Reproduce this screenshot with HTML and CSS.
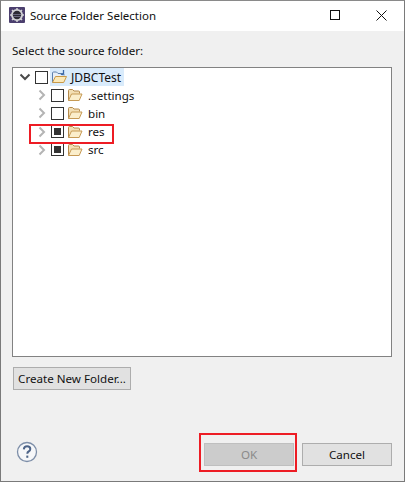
FILE: index.html
```html
<!DOCTYPE html>
<html lang="en">
<head>
<meta charset="utf-8">
<title>Source Folder Selection</title>
<link rel="stylesheet" href="styles.css">
</head>
<body>
<svg class="defs" width="0" height="0" aria-hidden="true">
  <defs>
    <symbol id="chev-right" viewBox="0 0 10 12"><path d="M2.5 1.5 7 6l-4.500 4.500" fill="none" stroke="#b4b4b4" stroke-width="2"/></symbol>
    <symbol id="chev-down" viewBox="0 0 12 10"><path d="M1.500 2.500 6 7l4.500-4.500" fill="none" stroke="#4a4a4a" stroke-width="2"/></symbol>
    <symbol id="folder" viewBox="0 0 16 14">
      <path d="M1.500 12.500V2.500q0-1 1-1h3l1.500 1.500h4.500q1 0 1 1v1.500" fill="#f3dfb4" stroke="#b58a4c"/>
      <path d="M1.500 12.500 4.500 6h10.500l-2.800 6.500z" fill="#fbeecb" stroke="#c69a55"/>
    </symbol>
  </defs>
</svg>
<div class="window">
  <header class="titlebar">
    <svg class="app-icon" width="16" height="16" viewBox="0 0 16 16">
      <rect width="16" height="16" rx="1" fill="#4b3f6e"/>
      <circle cx="8" cy="8" r="6" fill="#d2d2d6"/>
      <circle cx="8" cy="8" r="4.200" fill="#2c2a34"/>
      <path d="M3.800 7h8.400v1H3.800zM4 9h8v1H4z" fill="#6b6980"/>
      <path d="M8 1v2M8 13v2M1 8h2M13 8h2M3 3l1.500 1.500M13 3l-1.500 1.500M3 13l1.500-1.500M13 13l-1.500-1.500" stroke="#d2d2d6" stroke-width="1.500"/>
    </svg>
    <span class="title">Source Folder Selection</span>
    <div class="win-controls">
      <svg width="10" height="10" viewBox="0 0 10 10"><rect x=".5" y=".5" width="9" height="9" fill="none" stroke="#111"/></svg>
      <svg width="11" height="11" viewBox="0 0 11 11"><path d="M.5.500l10 10M10.500.500l-10 10" stroke="#111" fill="none"/></svg>
    </div>
  </header>
  <main class="content">
    <div class="prompt">Select the source folder:</div>
    <div class="tree">
      <div class="row row-root">
        <svg class="chev-d" width="12" height="10"><use href="#chev-down"/></svg>
        <span class="check"></span>
        <span class="root-sel">
          <svg class="project" width="17" height="16" viewBox="0 0 17 16">
            <path d="M1.500 13.500V4q0-1 1-1h3l1.500 1.500h5q1 0 1 1v1" fill="#e6eef6" stroke="#5d80ac"/>
            <path d="M1.500 13.500 4.500 7.500h11l-2.800 6z" fill="#fbe9b8" stroke="#c99a48"/>
            <path d="M12.500 1v3.500q0 1-1.200 1-.8 0-1.300-.6" fill="none" stroke="#3a68a8" stroke-width="1.300"/>
          </svg>
          <span class="label label-root">JDBCTest</span>
        </span>
      </div>
      <div class="row">
        <svg class="chev-r" width="10" height="12"><use href="#chev-right"/></svg>
        <span class="check"></span>
        <svg class="folder" width="16" height="14"><use href="#folder"/></svg>
        <span class="label">.settings</span>
      </div>
      <div class="row">
        <svg class="chev-r" width="10" height="12"><use href="#chev-right"/></svg>
        <span class="check"></span>
        <svg class="folder" width="16" height="14"><use href="#folder"/></svg>
        <span class="label">bin</span>
      </div>
      <div class="row">
        <svg class="chev-r" width="10" height="12"><use href="#chev-right"/></svg>
        <span class="check check-mixed"></span>
        <svg class="folder" width="16" height="14"><use href="#folder"/></svg>
        <span class="label">res</span>
      </div>
      <div class="row">
        <svg class="chev-r" width="10" height="12"><use href="#chev-right"/></svg>
        <span class="check check-mixed"></span>
        <svg class="folder" width="16" height="14"><use href="#folder"/></svg>
        <span class="label">src</span>
      </div>
    </div>
    <div class="create-row"><button class="btn btn-create" type="button">Create New Folder...</button></div>
    <footer class="footer">
      <svg class="help" width="22" height="22" viewBox="0 0 22 22">
        <circle cx="11" cy="11" r="9.500" fill="#f6f7f9" stroke="#7d8ea8" stroke-width="1.300"/>
        <path d="M7.800 8.300q.3-3 3.300-3 3.200 0 3.200 2.700 0 1.600-1.700 2.500-1.300.7-1.300 2.300" fill="none" stroke="#4d6488" stroke-width="2"/>
        <rect x="10.300" y="14.600" width="2" height="2.200" fill="#4d6488"/>
      </svg>
      <div class="actions">
        <button class="btn btn-ok" type="button" disabled>OK</button>
        <button class="btn btn-cancel" type="button">Cancel</button>
      </div>
    </footer>
  </main>
  <div class="mark mark-res"></div>
  <div class="mark mark-ok"></div>
</div>
</body>
</html>
```

FILE: styles.css
```css
* { box-sizing: border-box; }
html, body { margin: 0; padding: 0; }
body {
  width: 405px;
  height: 482px;
  overflow: hidden;
  background: #fff;
  font-family: "Noto Sans", "Open Sans", sans-serif;
  font-size: 11.600px;
  color: #111;
}
.defs { position: absolute; }
.window {
  position: relative;
  width: 405px;
  height: 482px;
  display: flex;
  flex-direction: column;
  border: 1px solid #7a7a7a;
  border-top-color: #8a8a8a;
}
.titlebar {
  height: 30px;
  flex: none;
  display: flex;
  align-items: center;
  padding-left: 8px;
  padding-bottom: 2px;
  background: #fff;
}
.app-icon { flex: none; }
.title { margin-left: 5px; font-size: 11.500px; }
.win-controls {
  margin-left: auto;
  display: flex;
  align-items: center;
  gap: 36px;
  padding-right: 17px;
}
.content {
  flex: 1;
  display: flex;
  flex-direction: column;
  background: #f0f0f0;
  padding: 0 12px 14px 11px;
}
.prompt { height: 36px; line-height: 40px; }
.tree {
  height: 290px;
  flex: none;
  background: #fff;
  border: 1px solid #828282;
}
.row {
  height: 18.200px;
  display: flex;
  align-items: center;
  padding-left: 24px;
}
.row-root { padding-left: 6px; }
.chev-d { flex: none; margin-right: 4px; }
.chev-r { flex: none; margin-right: 4px; }
.check {
  width: 13px;
  height: 13px;
  flex: none;
  border: 1px solid #333;
  background: #fff;
  display: flex;
  align-items: center;
  justify-content: center;
}
.check-mixed::before {
  content: "";
  width: 7px;
  height: 7px;
  background: #333;
}
.folder { flex: none; margin-left: 3px; margin-right: 5px; }
.root-sel {
  display: flex;
  align-items: center;
  height: 18px;
  margin-left: 2px;
  padding: 0 3px 0 1px;
  background: #d9ebfb;
}
.project { margin-right: 3px; }
.label { white-space: nowrap; }
.label-root { font-size: 12px; }
.create-row { margin-top: 10px; padding-left: 1px; }
.btn {
  height: 23px;
  padding: 0;
  font: inherit;
  color: #111;
  background: #e1e1e1;
  border: 1px solid #adadad;
}
.btn-create { width: 118px; }
.footer {
  margin-top: auto;
  display: flex;
  align-items: center;
  justify-content: space-between;
}
.help { margin-left: 4px; margin-bottom: 4px; }
.actions { display: flex; gap: 8px; }
.actions .btn { width: 90px; }
.btn-ok { background: #cccccc; border-color: #bfbfbf; color: #8a8a8a; }
.mark { position: absolute; border: 2px solid #ed1c24; pointer-events: none; }
.mark-res { left: 28px; top: 123px; width: 85px; height: 20px; }
.mark-ok { left: 198px; top: 432px; width: 98px; height: 39px; }
```
